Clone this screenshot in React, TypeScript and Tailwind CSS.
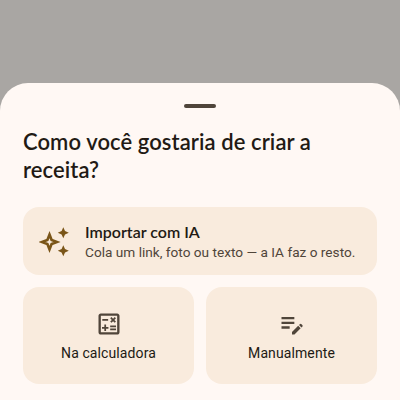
import { MdOutlineCalculate, MdOutlineEditNote } from "react-icons/md";

function Sparkles() {
  return (
    <svg width="32" height="32" viewBox="0 0 32 32" fill="none" className="shrink-0">
      <path
        d="M10.5 9.5 L12.6 14.9 L18 17 L12.6 19.1 L10.5 24.5 L8.4 19.1 L3 17 L8.4 14.9 Z"
        stroke="#7a5518"
        strokeWidth="2.6"
        strokeLinejoin="miter"
      />
      <path d="M24.3 2.2 L26 6 L29.8 7.7 L26 9.4 L24.3 13.2 L22.6 9.4 L18.8 7.7 L22.6 6 Z" fill="#7a5518" />
      <path d="M24.3 20.2 L26 24 L29.8 25.7 L26 27.4 L24.3 31.2 L22.6 27.4 L18.8 25.7 L22.6 24 Z" fill="#7a5518" />
    </svg>
  );
}

export default function App() {
  return (
    <div className="h-[400px] w-[400px] overflow-hidden bg-[#a9a6a3] flex flex-col justify-end">
      <div className="h-[317px] rounded-t-[28px] bg-[#fff8f4] px-[23px] flex flex-col">
        <div className="mt-[21px] self-center h-[4px] w-[32px] rounded-full bg-[#50453a]" />
        <h2 className="mt-[20px] text-[22px] leading-[28px] font-semibold tracking-[0.08px] text-[#221a14] font-['Lato',sans-serif]">
          Como você gostaria de criar a receita?
        </h2>
        <button className="mt-[23px] h-[68px] rounded-[16px] bg-[#f9ebdd] flex items-center gap-[14px] pl-[16px] text-left">
          <Sparkles />
          <div className="flex flex-col pt-[2px]">
            <span className="text-[16px] leading-[20px] font-semibold text-[#221a14] font-['Lato',sans-serif]">
              Importar com IA
            </span>
            <span className="text-[13.65px] leading-[20px] text-[#50453a] font-['Roboto',sans-serif]">
              Cola um link, foto ou texto — a IA faz o resto.
            </span>
          </div>
        </button>
        <div className="mt-[12px] grid grid-cols-2 gap-[12px]">
          <button className="h-[97px] rounded-[16px] bg-[#f9ebdd] flex flex-col items-center justify-center gap-[5px] pt-[2px]">
            <MdOutlineCalculate className="h-[28px] w-[28px] text-[#50453a]" />
            <span className="text-[14px] leading-[20px] font-normal tracking-[0.1px] text-[#221a14] font-['Roboto',sans-serif]">
              Na calculadora
            </span>
          </button>
          <button className="h-[97px] rounded-[16px] bg-[#f9ebdd] flex flex-col items-center justify-center gap-[5px] pt-[2px]">
            <MdOutlineEditNote className="h-[28px] w-[28px] text-[#50453a]" />
            <span className="text-[14px] leading-[20px] font-normal tracking-[0.1px] text-[#221a14] font-['Roboto',sans-serif]">
              Manualmente
            </span>
          </button>
        </div>
      </div>
    </div>
  );
}
